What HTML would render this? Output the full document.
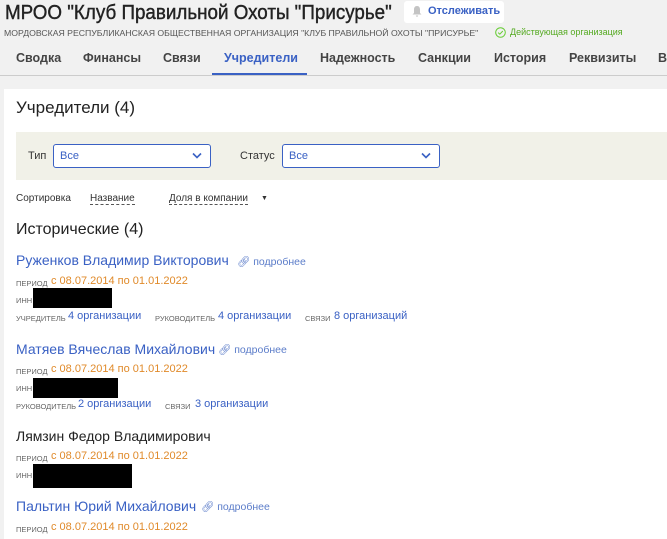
<!DOCTYPE html><html><head><meta charset="utf-8"><style>
body{margin:0;width:667px;height:539px;overflow:hidden;background:#f1f1f1;font-family:"Liberation Sans",sans-serif;position:relative}
.a{position:absolute;white-space:nowrap}
.blue{color:#3a61c4}
.sm{font-size:7.5px;color:#666;text-transform:uppercase}
.lnk{color:#3a61c4;font-size:11px}
.or{color:#e08a2a;font-size:11px}
.blk{background:#000;position:absolute}
.nm{font-size:14px}
</style></head><body>
<div class="a" style="left:5px;top:2px;font-size:20px;color:#222;transform:scaleX(0.94);transform-origin:left;-webkit-text-stroke:0.4px #222">МРОО "Клуб Правильной Охоты "Присурье"</div>
<div class="a" style="left:404px;top:1px;width:100px;height:22px;background:#fff;border-radius:3px"></div>
<svg class="a" style="left:411px;top:5px" width="12" height="13" viewBox="0 0 12 13"><path d="M6 1C3.8 1 3 2.8 3 4.5V8L1.5 9.5h9L9 8V4.5C9 2.8 8.2 1 6 1zM4.8 10.5a1.2 1.2 0 0 0 2.4 0z" fill="#c4c4c4"/></svg>
<div class="a" style="left:428px;top:5px;font-size:11px;color:#3a61c4;font-weight:bold">Отслеживать</div>
<div class="a" style="left:4px;top:28px;font-size:8.7px;color:#555">МОРДОВСКАЯ РЕСПУБЛИКАНСКАЯ ОБЩЕСТВЕННАЯ ОРГАНИЗАЦИЯ "КЛУБ ПРАВИЛЬНОЙ ОХОТЫ "ПРИСУРЬЕ"</div>
<svg class="a" style="left:495px;top:27px" width="11" height="11" viewBox="0 0 11 11"><circle cx="5.5" cy="5.5" r="4.8" fill="none" stroke="#6c3"/><path d="M3.2 5.6l1.6 1.6 3-3.2" fill="none" stroke="#6c3" stroke-width="1"/></svg>
<div class="a" style="left:510px;top:27px;font-size:9px;color:#5a2">Действующая организация</div>
<div class="a" style="left:16px;top:51px;font-size:12.5px;font-weight:bold;color:#444">
<span style="position:absolute;left:0">Сводка</span><span style="position:absolute;left:67px">Финансы</span><span style="position:absolute;left:147px">Связи</span><span style="position:absolute;left:208px;color:#3a61c4">Учредители</span><span style="position:absolute;left:304px">Надежность</span><span style="position:absolute;left:402px">Санкции</span><span style="position:absolute;left:478px">История</span><span style="position:absolute;left:553px">Реквизиты</span><span style="position:absolute;left:642px">В</span></div>
<div class="a" style="left:212px;top:73px;width:95px;height:2px;background:#3a61c4"></div>
<div class="a" style="left:0;top:75px;width:667px;height:1px;background:#ccc"></div>
<div class="a" style="left:4px;top:89px;width:663px;height:450px;background:#fff"></div>
<div class="a" style="left:16px;top:98px;font-size:17px;color:#222">Учредители (4)</div>
<div class="a" style="left:16px;top:132px;width:651px;height:48px;background:#f1f1e8"></div>
<div class="a" style="left:28px;top:150px;font-size:11px;color:#333">Тип</div>
<div class="a" style="left:53px;top:144px;width:156px;height:22px;border:1px solid #3a61c4;border-radius:3px;background:#fff"></div>
<div class="a" style="left:60px;top:150px;font-size:11px;color:#3a61c4">Все</div>
<svg class="a" style="left:192px;top:152px" width="10" height="7" viewBox="0 0 10 7"><path d="M1 1.5l4 4 4-4" fill="none" stroke="#3a61c4" stroke-width="1.6"/></svg>
<div class="a" style="left:240px;top:150px;font-size:11px;color:#333">Статус</div>
<div class="a" style="left:282px;top:144px;width:156px;height:22px;border:1px solid #3a61c4;border-radius:3px;background:#fff"></div>
<div class="a" style="left:289px;top:150px;font-size:11px;color:#3a61c4">Все</div>
<svg class="a" style="left:421px;top:152px" width="10" height="7" viewBox="0 0 10 7"><path d="M1 1.5l4 4 4-4" fill="none" stroke="#3a61c4" stroke-width="1.6"/></svg>
<div class="a" style="left:16px;top:193px;font-size:10px;color:#333">Сортировка</div>
<div class="a" style="left:90px;top:193px;font-size:10px;color:#333;border-bottom:1px dashed #555">Название</div>
<div class="a" style="left:169px;top:193px;font-size:10px;color:#333;border-bottom:1px dashed #555">Доля в компании</div>
<div class="a" style="left:261px;top:195px;font-size:7px;color:#333">▼</div>
<div class="a" style="left:16px;top:221px;font-size:16px;color:#222">Исторические (4)</div>

<div class="a blue nm" style="left:16px;top:252px">Руженков Владимир Викторович</div>
<div class="a" style="left:237px;top:255px;font-size:10.5px;color:#5b7cc9">&#128279;&#xFE0E; подробнее</div>
<div class="a sm" style="left:16px;top:279px">период</div><div class="a or" style="left:51px;top:275px">с 08.07.2014 по 01.01.2022</div>
<div class="a sm" style="left:16px;top:296px">инн</div><div class="blk" style="left:33px;top:288px;width:79px;height:20px"></div>
<div class="a sm" style="left:16px;top:314px">учредитель</div><div class="a lnk" style="left:68px;top:310px">4 организации</div>
<div class="a sm" style="left:155px;top:314px">руководитель</div><div class="a lnk" style="left:218px;top:310px">4 организации</div>
<div class="a sm" style="left:305px;top:314px">связи</div><div class="a lnk" style="left:334px;top:310px">8 организаций</div>

<div class="a blue nm" style="left:16px;top:341px">Матяев Вячеслав Михайлович</div>
<div class="a" style="left:218px;top:343px;font-size:10.5px;color:#5b7cc9">&#128279;&#xFE0E; подробнее</div>
<div class="a sm" style="left:16px;top:367px">период</div><div class="a or" style="left:51px;top:363px">с 08.07.2014 по 01.01.2022</div>
<div class="a sm" style="left:16px;top:384px">инн</div><div class="blk" style="left:33px;top:378px;width:85px;height:20px"></div>
<div class="a sm" style="left:16px;top:402px">руководитель</div><div class="a lnk" style="left:78px;top:398px">2 организации</div>
<div class="a sm" style="left:165px;top:402px">связи</div><div class="a lnk" style="left:195px;top:398px">3 организации</div>

<div class="a nm" style="left:16px;top:428px;color:#222">Лямзин Федор Владимирович</div>
<div class="a sm" style="left:16px;top:454px">период</div><div class="a or" style="left:51px;top:450px">с 08.07.2014 по 01.01.2022</div>
<div class="a sm" style="left:16px;top:471px">инн</div><div class="blk" style="left:33px;top:464px;width:99px;height:24px"></div>

<div class="a blue nm" style="left:16px;top:498px">Пальтин Юрий Михайлович</div>
<div class="a" style="left:201px;top:500px;font-size:10.5px;color:#5b7cc9">&#128279;&#xFE0E; подробнее</div>
<div class="a sm" style="left:16px;top:525px">период</div><div class="a or" style="left:51px;top:521px">с 08.07.2014 по 01.01.2022</div>
</body></html>
